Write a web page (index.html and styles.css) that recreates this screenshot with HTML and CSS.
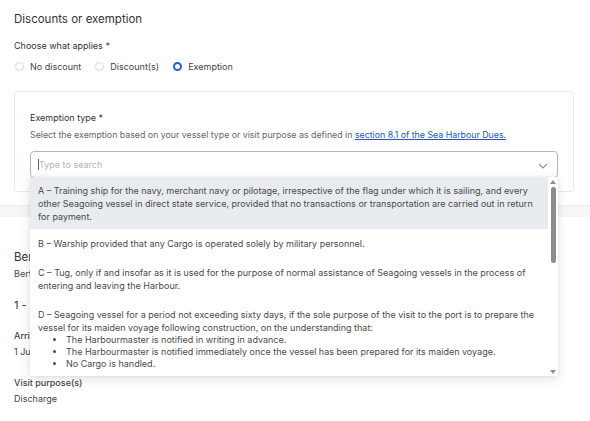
FILE: index.html
```html
<!DOCTYPE html>
<html lang="en">
<head>
<meta charset="utf-8">
<title>Discounts or exemption</title>
<link rel="stylesheet" href="styles.css">
</head>
<body>
<section class="section first">
  <h2 class="heading">Discounts or exemption</h2>
  <div class="label">Choose what applies *</div>
  <div class="radios">
    <label class="radio"><span class="dot"></span>No discount</label>
    <label class="radio"><span class="dot"></span>Discount(s)</label>
    <label class="radio"><span class="dot on"></span>Exemption</label>
  </div>
  <div class="card">
    <div class="label small">Exemption type *</div>
    <div class="hint">Select the exemption based on your vessel type or visit purpose as defined in <a href="#">section 8.1 of the Sea Harbour Dues.</a></div>
    <div class="combo">
      <div class="input"><span class="caret"></span><span class="ph">Type to search</span>
        <svg class="chev" width="10" height="6" viewBox="0 0 10 6"><path d="M1 1 L5 5 L9 1" fill="none" stroke="#8a94a6" stroke-width="1.1"/></svg>
      </div>
      <div class="menu">
        <div class="list">
          <div class="opt active">A – Training ship for the navy, merchant navy or pilotage, irrespective of the flag under which it is sailing, and every other Seagoing vessel in direct state service, provided that no transactions or transportation are carried out in return for payment.</div>
          <div class="opt">B – Warship provided that any Cargo is operated solely by military personnel.</div>
          <div class="opt">C – Tug, only if and insofar as it is used for the purpose of normal assistance of Seagoing vessels in the process of entering and leaving the Harbour.</div>
          <div class="opt">D – Seagoing vessel for a period not exceeding sixty days, if the sole purpose of the visit to the port is to prepare the vessel for its maiden voyage following construction, on the understanding that:
            <ul>
              <li>The Harbourmaster is notified in writing in advance.</li>
              <li>The Harbourmaster is notified immediately once the vessel has been prepared for its maiden voyage.</li>
              <li>No Cargo is handled.</li>
            </ul>
          </div>
          <div class="opt">E – Seagoing vessel that calls at the port exclusively for the purpose of repairs.</div>
        </div>
        <div class="scrollbar">
          <span class="arrow up"></span>
          <span class="thumb"></span>
          <span class="arrow down"></span>
        </div>
      </div>
    </div>
  </div>
</section>
<div class="band"></div>
<section class="section second">
  <h2 class="heading">Berth</h2>
  <div class="text t-berth">Berth details</div>
  <div class="text big">1 - A</div>
  <div class="field-label f-arrival">Arrival</div>
  <div class="text t-value">1 June</div>
  <div class="field-label f-purpose">Visit purpose(s)</div>
  <div class="text t-value">Discharge</div>
</section>
</body>
</html>
```
FILE: styles.css
```css
* { box-sizing: border-box; }
body {
  margin: 0;
  background: #fff;
  font-family: Inter, "Noto Sans", sans-serif;
  color: #333;
  width: 590px;
  height: 421px;
  overflow: hidden;
}
.section { padding: 0 14px; }
.first { padding-top: 11px; }
.heading {
  margin: 0;
  font-size: 11.5px;
  font-weight: 400;
  color: #333;
  line-height: 16px;
}
.label {
  font-size: 9px;
  color: #333;
  margin-top: 13px;
  line-height: 12px;
}
.radios {
  display: flex;
  gap: 13px;
  margin-top: 8px;
  height: 12px;
  align-items: center;
}
.radio {
  display: flex;
  align-items: center;
  gap: 6px;
  font-size: 9px;
  color: #444;
}
.dot {
  width: 9px;
  height: 9px;
  border-radius: 50%;
  border: 1px solid #d6d9de;
  background: #fff;
  margin-left: 1px;
}
.dot.on {
  border: 2.6px solid #1d62d6;
}
.card {
  margin-top: 19px;
  border: 1px solid #eaeaea;
  border-radius: 3px;
  padding: 20px 15px 13px;
  width: 560px;
  height: 101px;
}
.label.small { margin-top: 0; }
.hint {
  margin-top: 5px;
  font-size: 8.8px;
  color: #666;
  line-height: 12px;
}
.hint a { color: #2557b8; text-decoration: underline; }
.combo { position: relative; margin-top: 10px; }
.input {
  height: 27px;
  border: 1px solid #a9b9d6;
  border-radius: 4px;
  display: flex;
  align-items: center;
  padding-left: 7px;
  font-size: 9px;
  color: #b3b3b3;
  position: relative;
}
.caret {
  width: 1px;
  height: 11px;
  background: #666;
}
.chev { position: absolute; right: 9px; top: 11px; }
.menu {
  position: absolute;
  left: 0;
  top: 26px;
  width: 528px;
  height: 199px;
  background: #fff;
  box-shadow: 0 3px 10px rgba(0,0,0,0.12), 0 0 2px rgba(0,0,0,0.08);
  display: flex;
  overflow: hidden;
  z-index: 5;
}
.list {
  flex: 1;
  font-size: 9px;
  line-height: 13px;
  color: #4a4a4a;
}
.opt { padding: 8px 14px 8px 8px; }
.opt.active { background: #e8ebef; padding-top: 7px; padding-bottom: 6px; }
.opt ul { margin: 0; padding-left: 28px; list-style: disc; line-height: 12px; }
.scrollbar {
  width: 10px;
  display: flex;
  flex-direction: column;
  align-items: center;
  padding: 3px 0 2px;
  background: #fff;
}
.arrow { width: 0; height: 0; border-left: 3px solid transparent; border-right: 3px solid transparent; }
.arrow.up { border-bottom: 4px solid #8f8f8f; }
.arrow.down { border-top: 4px solid #8f8f8f; margin-top: auto; }
.thumb {
  width: 5px;
  height: 76px;
  margin-top: 3px;
  background: #8c8c8c;
  border-radius: 3px;
}
.band {
  margin-top: 13px;
  height: 12px;
  background: #f6f6f6;
  border-top: 1px solid #efefef;
}
.second { padding-top: 32px; }
.text {
  font-size: 9px;
  line-height: 12px;
  color: #444;
}
.t-berth { margin-top: 3px; }
.text.big { font-size: 11px; line-height: 14px; margin-top: 18px; color: #333; }
.field-label {
  font-size: 9px;
  font-weight: 500;
  color: #444;
  line-height: 12px;
}
.f-arrival { margin-top: 18px; }
.f-purpose { margin-top: 19px; }
.t-value { margin-top: 4px; }
```
